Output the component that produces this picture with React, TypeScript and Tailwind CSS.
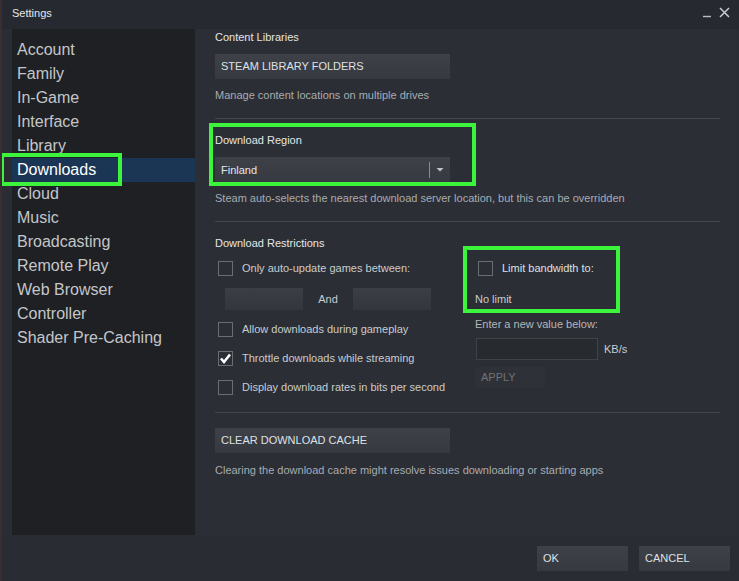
import React from 'react';

const navItems = [
    'Account',
    'Family',
    'In-Game',
    'Interface',
    'Library',
    'Downloads',
    'Cloud',
    'Music',
    'Broadcasting',
    'Remote Play',
    'Web Browser',
    'Controller',
    'Shader Pre-Caching',
];

// Checkbox in the Steam style
const CheckBox: React.FC<{ checked?: boolean }> = ({ checked }) => (
    <span className="w-[15px] h-[15px] border border-[#6a6d72] flex items-center justify-center shrink-0">
        {checked && (
            <svg width="13" height="13" viewBox="0 0 13 13">
                <path d="M2 6.5 L5 10 L11 2.5" fill="none" stroke="#ffffff" strokeWidth="2.6" />
            </svg>
        )}
    </span>
);

const CheckRow: React.FC<{ label: string; checked?: boolean }> = ({ label, checked }) => (
    <div className="flex items-center h-[15px] pl-[3px]">
        <CheckBox checked={checked} />
        <span className="ml-[9px] text-[#c9ccd0]">{label}</span>
    </div>
);

const Button: React.FC<{ label: string; className?: string }> = ({ label, className }) => (
    <div className={`h-[25px] flex items-center px-[6px] bg-gradient-to-b from-[#3e4148] to-[#363940] text-[#dfe1e4] ${className ?? ''}`}>
        {label}
    </div>
);

const Separator: React.FC = () => <div className="h-px bg-[#43464c] mr-[15px]" />;

const App: React.FC = () => {
    return (
        <div
            className="w-[739px] h-[581px] bg-[#2a2d33] flex flex-col border-l-2 border-[#3b2d31] overflow-hidden"
            style={{ fontFamily: '"Liberation Sans", Arial, sans-serif' }}
        >
            {/* Naslovna traka */}
            <div className="h-[29px] flex items-start justify-between bg-[#262930] pl-[10px] pr-[9px]">
                <span className="mt-[5px] text-[11px] text-[#e6e7e9]">Settings</span>
                <div className="flex items-center gap-[8px] mt-[7px]">
                    <svg width="8" height="11" viewBox="0 0 8 11">
                        <path d="M0 9.5 H8" stroke="#b9bcc0" strokeWidth="1.4" />
                    </svg>
                    <svg width="11" height="11" viewBox="0 0 11 11">
                        <path d="M1 1 L10 10 M10 1 L1 10" stroke="#c9cbcf" strokeWidth="1.5" />
                    </svg>
                </div>
            </div>

            <div className="flex flex-1 min-h-0">
                {/* Bocni meni */}
                <div className="relative w-[183px] ml-[10px] bg-[#1e2024] pt-[9px]">
                    {navItems.map((item) => (
                        <div
                            key={item}
                            className={`h-[24px] flex items-center pl-[5px] text-[16px] ${item === 'Downloads' ? 'bg-[#1b3654] text-white' : 'text-[#c4c6ca]'}`}
                        >
                            {item}
                        </div>
                    ))}
                    {/* Oznaka oko Downloads */}
                    <div className="absolute left-[-12px] top-[124px] w-[122px] h-[33px] border-4 border-[#3cf43c]" />
                </div>

                {/* Sadrzaj */}
                <div className="flex-1 bg-[#2b2e34] mr-[4px] pl-[20px] text-[11px] text-[#e4e6e8] flex flex-col">
                    <div className="mt-[2px] h-[13px] leading-[13px]">Content Libraries</div>
                    <Button label="STEAM LIBRARY FOLDERS" className="w-[235px] mt-[10px]" />
                    <div className="mt-[10px] h-[13px] leading-[13px] text-[#a8acb2]">
                        Manage content locations on multiple drives
                    </div>
                    <div className="mt-[16px]">
                        <Separator />
                    </div>

                    <div className="relative">
                        <div className="mt-[15px] h-[13px] leading-[13px]">Download Region</div>
                        <div className="mt-[10px] w-[235px] h-[26px] flex items-center bg-gradient-to-b from-[#3e4148] to-[#363940] pl-[6px]">
                            <span className="flex-1 text-[#e4e6e8]">Finland</span>
                            <span className="w-px h-[16px] bg-[#8a8d93]" />
                            <svg width="20" height="10" viewBox="0 0 20 10">
                                <path d="M6.5 3 H13.5 L10 6.5 Z" fill="#c2c4c8" />
                            </svg>
                        </div>
                        <div className="absolute left-[-6px] top-[4px] w-[267px] h-[63px] border-4 border-[#3cf43c]" />
                    </div>
                    <div className="mt-[9px] h-[13px] leading-[13px] text-[#a8acb2]">
                        Steam auto-selects the nearest download server location, but this can be overridden
                    </div>
                    <div className="mt-[16px]">
                        <Separator />
                    </div>

                    <div className="mt-[15px] h-[13px] leading-[13px]">Download Restrictions</div>
                    <div className="flex mt-[11px]">
                        {/* Leva kolona */}
                        <div className="w-[260px] flex flex-col">
                            <CheckRow label="Only auto-update games between:" />
                            <div className="flex items-center mt-[12px] ml-[10px]">
                                <div className="w-[78px] h-[22px] bg-gradient-to-b from-[#3b3e44] to-[#33363c]" />
                                <span className="w-[50px] text-center text-[#c9ccd0]">And</span>
                                <div className="w-[78px] h-[22px] bg-gradient-to-b from-[#3b3e44] to-[#33363c]" />
                            </div>
                            <div className="mt-[12px]">
                                <CheckRow label="Allow downloads during gameplay" />
                            </div>
                            <div className="mt-[14px]">
                                <CheckRow label="Throttle downloads while streaming" checked />
                            </div>
                            <div className="mt-[14px]">
                                <CheckRow label="Display download rates in bits per second" />
                            </div>
                        </div>

                        {/* Desna kolona */}
                        <div className="relative flex flex-col text-[#c9ccd0]">
                            <div className="flex items-center h-[15px] pl-[3px]">
                                <CheckBox />
                                <span className="ml-[9px] text-[#dfe1e4]">Limit bandwidth to:</span>
                            </div>
                            <div className="mt-[17px] h-[13px] leading-[13px]">No limit</div>
                            <div className="mt-[12px] h-[13px] leading-[13px] text-[#b3b6bb]">Enter a new value below:</div>
                            <div className="flex items-center mt-[7px]">
                                <div className="w-[122px] h-[22px] ml-px bg-[#272a2f] border border-[#3f4248]" />
                                <span className="ml-[6px]">KB/s</span>
                            </div>
                            <div className="mt-[7px] w-[70px] h-[21px] flex items-center pl-[6px] bg-[#2e3137] text-[#6e7278]">
                                APPLY
                            </div>
                            <div className="absolute left-[-12px] top-[-15px] w-[157px] h-[67px] border-4 border-[#3cf43c]" />
                        </div>
                    </div>

                    <div className="mt-[17px]">
                        <Separator />
                    </div>
                    <Button label="CLEAR DOWNLOAD CACHE" className="w-[235px] mt-[15px]" />
                    <div className="mt-[11px] h-[13px] leading-[13px] text-[#a8acb2]">
                        Clearing the download cache might resolve issues downloading or starting apps
                    </div>
                </div>
            </div>

            {/* Donja traka sa dugmadima */}
            <div className="h-[46px] flex items-start justify-end gap-[11px] pr-[9px] pt-[11px] bg-[#292c32] text-[11px]">
                <Button label="OK" className="w-[91px] h-[24px]" />
                <Button label="CANCEL" className="w-[91px] h-[24px]" />
            </div>
        </div>
    );
};

export default App;
